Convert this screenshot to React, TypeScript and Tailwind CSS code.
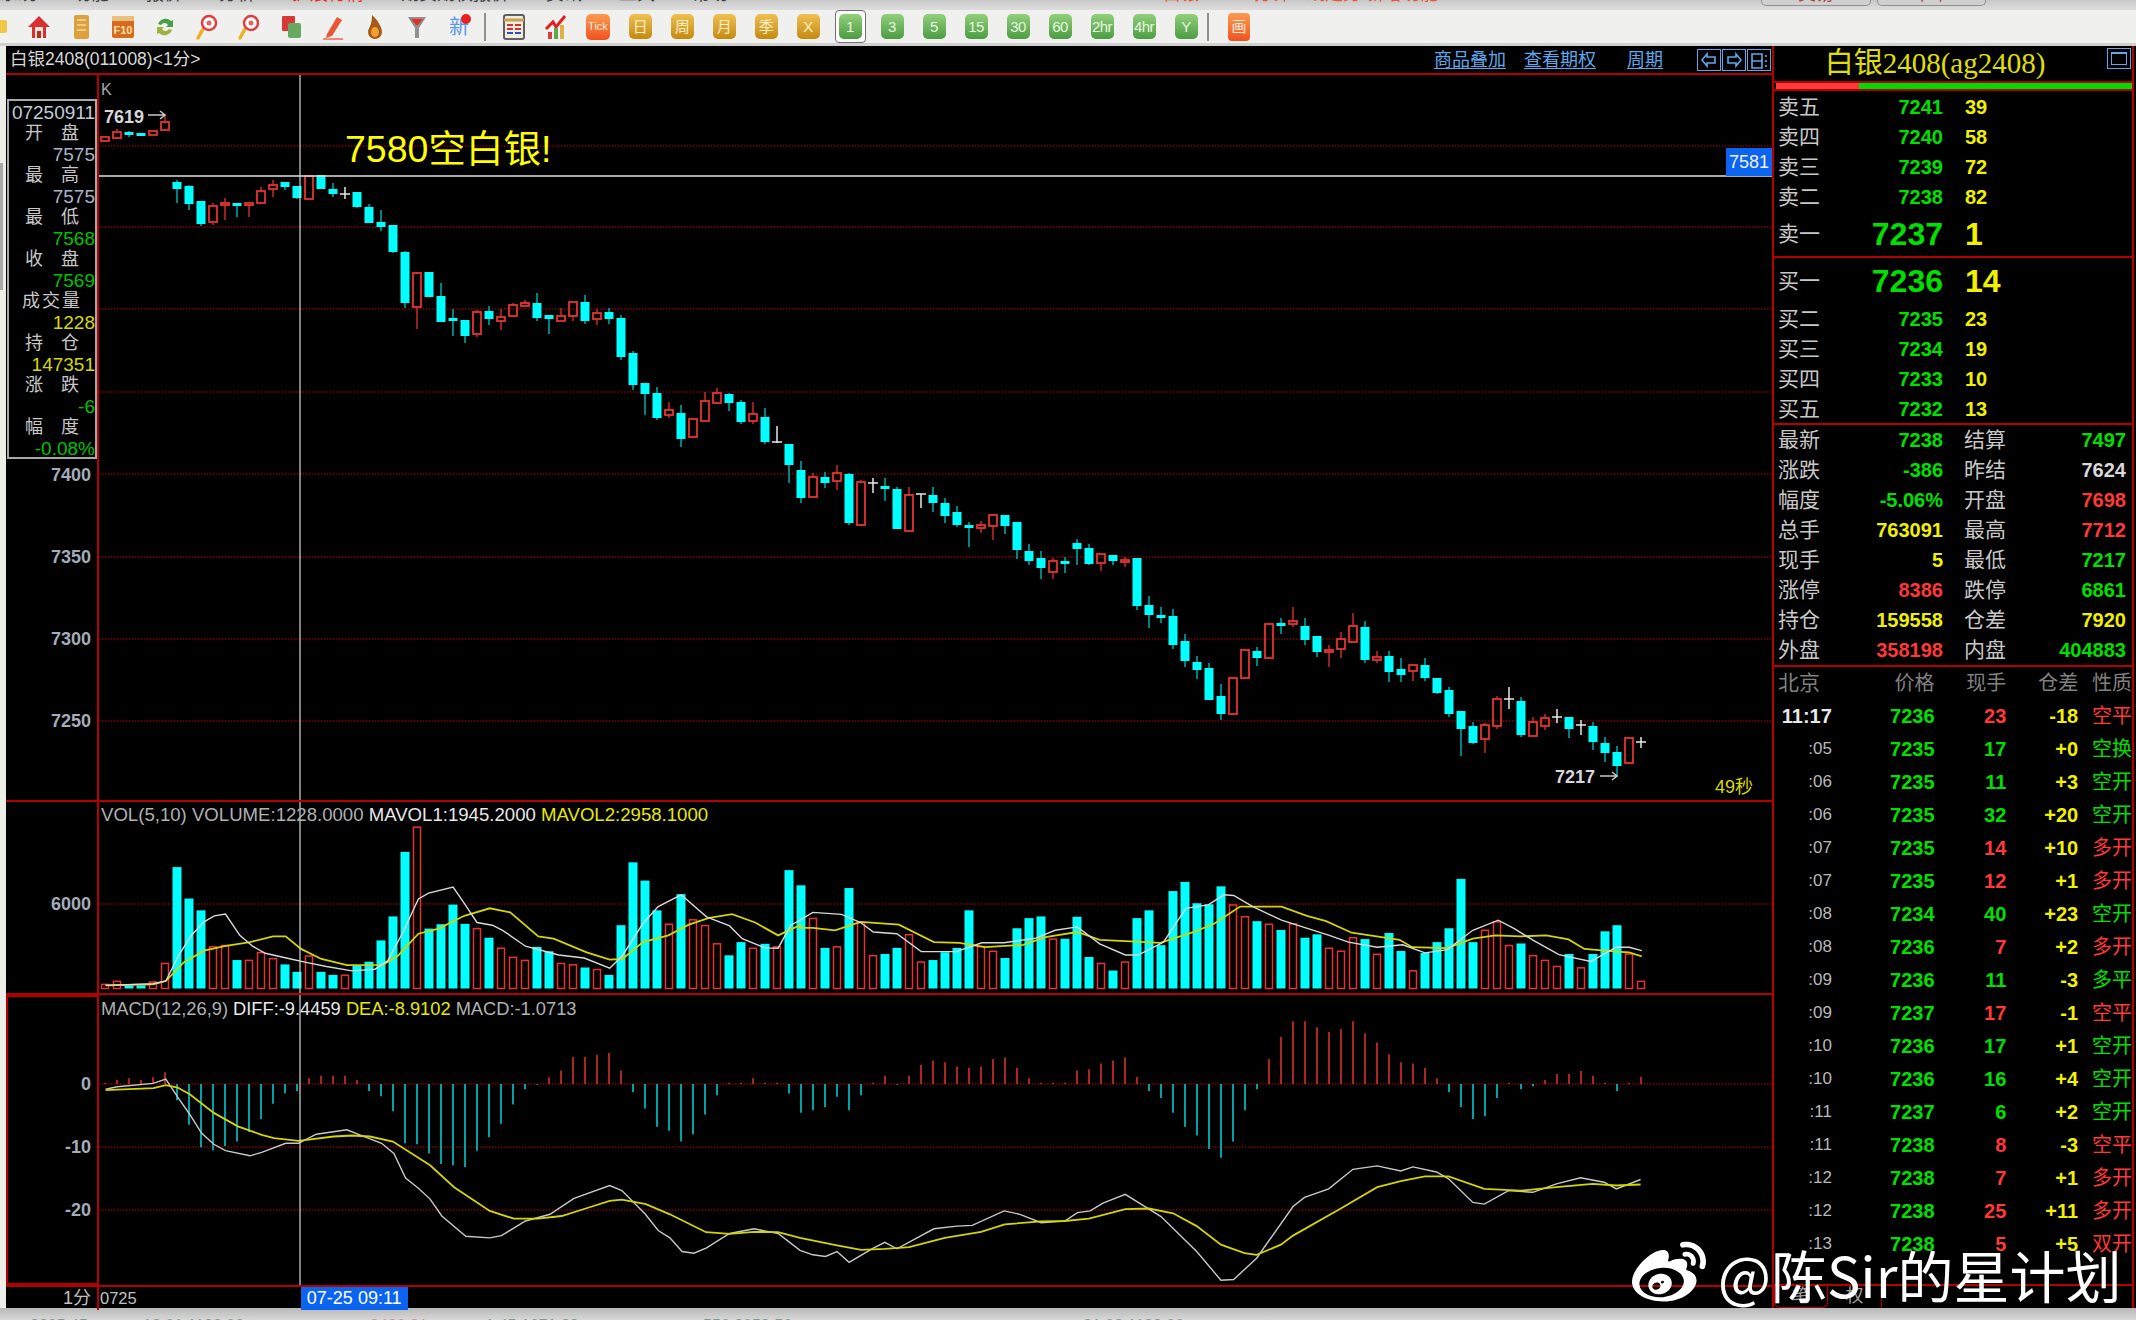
import React from 'react';
import { FaWeibo } from 'react-icons/fa';

type Kind = 'c' | 'r' | 'w';
type Candle = [number, number, number, number, Kind];

// body top, body bottom, wick top, wick bottom, colour (y in page pixels)
const candles: Candle[] = [
  [137, 141, 137, 141, 'r'], [132, 138, 129, 138, 'r'], [132, 135, 131, 137, 'c'], [133, 136, 133, 136, 'c'], [131, 135, 131, 135, 'r'], [122, 130, 114, 130, 'r'],
  [182, 189, 180, 203, 'c'], [186, 204, 185, 210, 'c'], [201, 224, 201, 226, 'c'], [206, 222, 203, 225, 'r'], [203, 205, 198, 220, 'r'], [203, 205, 203, 217, 'c'],
  [203, 205, 203, 217, 'r'], [191, 203, 187, 203, 'r'], [185, 189, 180, 197, 'r'], [182, 187, 182, 190, 'c'], [186, 198, 186, 199, 'c'], [176, 199, 176, 199, 'r'],
  [175, 189, 175, 189, 'c'], [189, 194, 183, 197, 'c'], [194, 194, 187, 199, 'w'], [192, 207, 192, 208, 'c'], [207, 223, 204, 223, 'c'], [222, 227, 210, 231, 'c'],
  [225, 252, 225, 253, 'c'], [252, 303, 251, 308, 'c'], [273, 307, 272, 329, 'r'], [272, 297, 272, 297, 'c'], [296, 322, 283, 322, 'c'], [318, 320, 309, 336, 'c'],
  [320, 336, 320, 343, 'c'], [312, 334, 310, 337, 'r'], [311, 319, 306, 325, 'c'], [317, 321, 309, 330, 'r'], [305, 316, 303, 316, 'r'], [303, 306, 300, 307, 'r'],
  [303, 318, 293, 321, 'c'], [315, 319, 315, 334, 'c'], [316, 321, 308, 321, 'r'], [302, 316, 302, 321, 'r'], [302, 321, 295, 324, 'c'], [313, 319, 309, 325, 'r'],
  [312, 319, 308, 324, 'c'], [318, 357, 315, 360, 'c'], [353, 385, 351, 390, 'c'], [383, 394, 383, 415, 'c'], [393, 418, 387, 420, 'c'], [410, 415, 402, 418, 'r'],
  [413, 439, 405, 447, 'c'], [419, 437, 419, 437, 'r'], [401, 421, 392, 421, 'r'], [393, 403, 388, 404, 'r'], [394, 403, 393, 411, 'c'], [402, 422, 400, 424, 'c'],
  [414, 421, 402, 424, 'r'], [417, 442, 408, 444, 'c'], [442, 442, 426, 443, 'w'], [444, 465, 444, 483, 'c'], [470, 498, 461, 503, 'c'], [477, 497, 473, 497, 'r'],
  [477, 483, 472, 488, 'c'], [473, 481, 465, 490, 'r'], [474, 523, 473, 525, 'c'], [482, 525, 480, 526, 'r'], [483, 483, 478, 493, 'w'], [486, 489, 478, 501, 'c'],
  [489, 529, 487, 529, 'c'], [495, 531, 487, 531, 'r'], [494, 494, 494, 508, 'w'], [495, 503, 487, 512, 'c'], [503, 516, 498, 523, 'c'], [512, 525, 506, 527, 'c'],
  [525, 528, 522, 547, 'c'], [525, 528, 521, 533, 'r'], [515, 526, 515, 540, 'r'], [515, 526, 515, 534, 'c'], [522, 550, 522, 559, 'c'], [551, 561, 544, 565, 'c'],
  [558, 568, 551, 579, 'c'], [561, 572, 558, 579, 'r'], [561, 563, 557, 573, 'c'], [543, 549, 539, 565, 'c'], [548, 564, 544, 565, 'c'], [554, 563, 554, 571, 'r'],
  [555, 561, 555, 565, 'c'], [560, 562, 557, 567, 'r'], [558, 606, 558, 610, 'c'], [605, 615, 596, 628, 'c'], [615, 618, 607, 623, 'c'], [616, 645, 609, 649, 'c'],
  [641, 661, 634, 667, 'c'], [662, 670, 656, 679, 'c'], [668, 700, 663, 700, 'c'], [696, 714, 684, 720, 'c'], [678, 714, 677, 715, 'r'], [650, 678, 650, 678, 'r'],
  [651, 658, 647, 666, 'c'], [624, 658, 624, 658, 'r'], [623, 625, 618, 634, 'c'], [621, 624, 607, 627, 'r'], [626, 640, 618, 645, 'c'], [636, 652, 636, 657, 'c'],
  [650, 652, 645, 667, 'r'], [639, 649, 632, 658, 'r'], [626, 642, 613, 642, 'r'], [627, 660, 621, 663, 'c'], [657, 660, 651, 663, 'r'], [656, 672, 651, 682, 'c'],
  [669, 675, 658, 682, 'c'], [665, 671, 664, 681, 'r'], [665, 678, 658, 681, 'c'], [678, 693, 678, 694, 'c'], [690, 714, 687, 717, 'c'], [711, 729, 711, 756, 'c'],
  [726, 743, 722, 744, 'c'], [725, 739, 723, 753, 'r'], [699, 726, 696, 729, 'r'], [699, 699, 687, 709, 'w'], [701, 735, 697, 737, 'c'], [722, 736, 717, 736, 'r'],
  [718, 726, 714, 730, 'r'], [717, 717, 709, 723, 'w'], [717, 729, 717, 738, 'c'], [725, 725, 720, 735, 'w'], [726, 742, 722, 750, 'c'], [743, 753, 737, 762, 'c'],
  [752, 766, 746, 777, 'c'], [738, 763, 738, 763, 'r'], [742, 742, 737, 748, 'w'],
];

// top of each volume bar in zoomed units, negative means a red bar
const volumes = [
  -575, -566, 578, 578, -568, -513, 228, 321, 356, -464, -460, 503, -504, -481, -499, 516, 538, -491, 538, 547, -548, 520, 508, 445, 374, 183, -110, 410, 397, 339,
  396, -410, 437, -468, -495, -504, 464, 477, -513, -517, 525, -531, 547, 400, 214, 268, 356, -397, 308, -384, -401, -455, 489, 450, -468, 455, -464, 237, 282, -380,
  467, -464, 290, -392, -490, 485, 467, -428, -509, 503, 480, 467, 356, -463, -477, 497, 409, 379, 374, -441, 440, 375, 494, -513, 534, -509, 379, 356, 459, 299,
  272, 335, 338, 285, -340, -375, 388, -397, 414, -396, 437, 427, -468, -477, -437, 441, -486, 423, 476, -535, 482, 450, 409, 263, 450, -415, -390, -460, 454, -490,
  -504, -522, 485, -526, 485, 418, 400, -485, -566,
];

// tip of each MACD stick in zoomed units, the zero line is at 868
const macdTips = [
  866, 858, 853, 858, 850, 835, 918, 990, 1057, 1066, 1053, 1040, 1012, 973, 928, 897, 890, 853, 845, 845, 845, 858, 890, 906, 950, 1045, 1048, 1075, 1106, 1110,
  1115, 1067, 1027, 987, 930, 885, 872, 850, 830, 790, 790, 783, 778, 830, 893, 942, 996, 1008, 1040, 1018, 960, 903, 866, 866, 853, 866, 866, 898, 955, 947,
  938, 907, 947, 903, 866, 845, 872, 845, 813, 800, 805, 818, 822, 818, 796, 791, 822, 853, 866, 866, 866, 830, 826, 809, 800, 791, 849, 890, 911, 955,
  996, 1022, 1062, 1088, 1040, 947, 885, 796, 730, 684, 684, 702, 716, 707, 684, 720, 747, 782, 805, 809, 822, 853, 893, 938, 973, 965, 911, 866, 885, 876,
  858, 840, 840, 831, 845, 866, 890, 866, 849,
];

// line points: first part read at 1.96 per px from x=0, second part at 1.568 per px from x=800
const toLine = (left: number[][], right: number[][]) =>
  [...left.map(([u, v]) => [u / 1.96, v]), ...right.map(([u, v]) => [800 + u / 1.568, v])]
    .map(([x, v]) => `${x.toFixed(1)},${(790 + v / 2.958).toFixed(1)}`)
    .join(' ');

const mavol1 = toLine(
  [[207, 578], [300, 573], [325, 565], [350, 490], [375, 430], [400, 390], [420, 372], [442, 367], [470, 430], [495, 462], [520, 483], [570, 500], [600, 510], [640, 522], [690, 535], [735, 530], [760, 505], [790, 420], [820, 322], [840, 305], [888, 287], [910, 335], [935, 392], [965, 400], [985, 415], [1030, 462], [1075, 480], [1095, 488], [1145, 497], [1195, 527], [1220, 490], [1260, 395], [1290, 345], [1335, 310], [1385, 375], [1430, 402], [1455, 440], [1500, 467], [1525, 468], [1550, 400]],
  [[0, 385], [20, 362], [65, 368], [95, 392], [115, 420], [152, 425], [190, 478], [245, 478], [285, 452], [320, 452], [370, 438], [400, 415], [435, 405], [470, 455], [510, 488], [530, 488], [570, 450], [605, 350], [640, 340], [665, 310], [680, 312], [710, 345], [755, 385], [830, 430], [860, 450], [905, 465], [945, 458], [980, 482], [1015, 472], [1055, 415], [1095, 385], [1120, 410], [1150, 445], [1190, 487], [1240, 507], [1280, 465], [1300, 465], [1320, 475]],
);
const mavol2 = toLine(
  [[207, 578], [300, 575], [325, 565], [360, 510], [400, 475], [440, 462], [490, 450], [535, 433], [560, 433], [590, 470], [630, 500], [680, 518], [750, 517], [780, 490], [820, 425], [860, 410], [910, 372], [960, 350], [1000, 362], [1055, 433], [1085, 440], [1150, 480], [1195, 502], [1220, 500], [1260, 450], [1310, 430], [1350, 398], [1390, 378], [1435, 367], [1480, 392], [1525, 430], [1568, 400]],
  [[0, 408], [20, 408], [55, 415], [95, 390], [155, 398], [210, 450], [250, 452], [290, 465], [350, 458], [385, 435], [435, 420], [470, 443], [510, 447], [565, 452], [620, 418], [650, 395], [690, 345], [720, 345], [755, 345], [795, 372], [825, 388], [865, 422], [940, 443], [960, 465], [1015, 468], [1055, 440], [1090, 430], [1130, 433], [1170, 430], [1205, 442], [1230, 470], [1280, 478], [1300, 480], [1320, 492]],
);
const diff = toLine(
  [[207, 885], [230, 878], [300, 868], [325, 855], [350, 912], [372, 960], [395, 1015], [419, 1048], [442, 1067], [490, 1082], [513, 1072], [560, 1045], [585, 1045], [620, 1018], [680, 1005], [705, 1020], [748, 1045], [772, 1075], [795, 1148], [820, 1178], [843, 1210], [866, 1260], [913, 1320], [960, 1325], [983, 1318], [1030, 1275], [1078, 1255], [1125, 1208], [1195, 1170], [1219, 1185], [1265, 1255], [1290, 1303], [1313, 1325], [1337, 1365], [1360, 1370], [1384, 1355], [1430, 1312], [1478, 1298], [1525, 1312]],
  [[0, 1362], [20, 1375], [40, 1380], [58, 1365], [77, 1397], [115, 1355], [133, 1338], [152, 1357], [210, 1298], [246, 1290], [270, 1288], [320, 1245], [345, 1255], [378, 1280], [415, 1275], [435, 1250], [455, 1245], [475, 1222], [510, 1196], [566, 1262], [622, 1365], [660, 1450], [680, 1448], [716, 1385], [773, 1232], [791, 1205], [829, 1180], [867, 1122], [905, 1112], [942, 1127], [961, 1115], [998, 1130], [1017, 1150], [1055, 1220], [1073, 1225], [1111, 1185], [1149, 1190], [1186, 1165], [1224, 1147], [1261, 1160], [1280, 1180], [1318, 1152]],
);
const dea = toLine(
  [[207, 888], [254, 885], [301, 882], [325, 873], [348, 880], [372, 900], [419, 955], [466, 995], [513, 1020], [537, 1030], [585, 1038], [654, 1025], [690, 1022], [725, 1025], [770, 1040], [843, 1110], [890, 1175], [960, 1245], [1007, 1268], [1054, 1268], [1101, 1260], [1148, 1238], [1195, 1215], [1219, 1212], [1266, 1225], [1313, 1255], [1384, 1308], [1430, 1313], [1478, 1307], [1525, 1308]],
  [[0, 1325], [58, 1347], [96, 1360], [133, 1357], [171, 1352], [227, 1325], [284, 1307], [321, 1285], [378, 1276], [415, 1275], [453, 1268], [510, 1240], [547, 1238], [585, 1252], [622, 1290], [660, 1345], [697, 1370], [716, 1375], [754, 1345], [773, 1318], [848, 1238], [905, 1175], [942, 1157], [980, 1143], [1017, 1143], [1073, 1180], [1130, 1185], [1186, 1175], [1243, 1165], [1280, 1170], [1318, 1167]],
);

const CROSS_X = 300;
const barX = (i: number) => 105 + 12 * i;
const CYAN = '#00ffff';
const RED = '#e63232';

const Grid: React.FC<{ ys: number[] }> = ({ ys }) => (
  <>
    {ys.map((y) => (
      <line key={y} x1={99} x2={1772} y1={y} y2={y} stroke="#800000" strokeWidth={1.5} strokeDasharray="1.5 1.5" />
    ))}
  </>
);

const CandleChart: React.FC = () => (
  <svg className="block w-full h-full" viewBox="99 75 1673 725">
    <Grid ys={[146, 227, 309, 392, 474, 557, 639, 721]} />
    {candles.map(([top, bot, wt, wb, kind], i) => {
      const x = barX(i);
      if (kind === 'w') {
        return (
          <g key={i} stroke="#e8e8e8" strokeWidth={1.5}>
            <line x1={x} x2={x} y1={wt} y2={wb} />
            <line x1={x - 5} x2={x + 5} y1={top} y2={top} />
          </g>
        );
      }
      if (kind === 'r') {
        return (
          <g key={i} stroke={RED} fill="none">
            <line x1={x} x2={x} y1={wt} y2={top} strokeWidth={1.3} />
            <line x1={x} x2={x} y1={bot} y2={wb} strokeWidth={1.3} />
            <rect x={x - 4} y={top} width={8} height={bot - top} strokeWidth={1.8} />
          </g>
        );
      }
      return (
        <g key={i} fill={CYAN} stroke="none">
          <rect x={x - 0.6} y={wt} width={1.2} height={wb - wt} fill="#00d8d8" />
          <rect x={x - 4.5} y={top} width={9} height={Math.max(bot - top, 3)} />
        </g>
      );
    })}
    <line x1={99} x2={1772} y1={176} y2={176} stroke="#e0e0e0" strokeWidth={1.6} />
    <line x1={CROSS_X} x2={CROSS_X} y1={75} y2={800} stroke="#d8d8d8" strokeWidth={1.2} />
    <path d="M148 115H165M160 111l5 4-5 4" stroke="#c8c8c8" strokeWidth={1.5} fill="none" />
    <path d="M1600 776H1617M1612 772l5 4-5 4" stroke="#c8c8c8" strokeWidth={1.5} fill="none" />
  </svg>
);

const VolumeChart: React.FC = () => (
  <svg className="block w-full h-full" viewBox="99 802 1673 191">
    <Grid ys={[904]} />
    {volumes.map((v, i) => {
      const top = 790 + Math.abs(v) / 2.958;
      const x = barX(i);
      return v < 0 ? (
        <rect key={i} x={x - 3.5} y={top} width={7} height={988.5 - top} fill="none" stroke={RED} strokeWidth={1.5} />
      ) : (
        <rect key={i} x={x - 4.5} y={top} width={9} height={988.5 - top} fill={CYAN} />
      );
    })}
    <polyline points={mavol2} fill="none" stroke="#d4d400" strokeWidth={1.8} />
    <polyline points={mavol1} fill="none" stroke="#d8d8d8" strokeWidth={1.4} />
    <line x1={CROSS_X} x2={CROSS_X} y1={802} y2={993} stroke="#d8d8d8" strokeWidth={1.2} />
  </svg>
);

const MacdChart: React.FC = () => (
  <svg className="block w-full h-full" viewBox="99 995 1673 290">
    <Grid ys={[1084, 1147, 1210]} />
    {macdTips.map((v, i) => {
      const tip = 790 + v / 2.958;
      return <line key={i} x1={barX(i)} x2={barX(i)} y1={1084} y2={tip} stroke={v > 868 ? '#00d8e0' : RED} strokeWidth={1.5} />;
    })}
    <polyline points={diff} fill="none" stroke="#c8c8c8" strokeWidth={1.4} />
    <polyline points={dea} fill="none" stroke="#d4d400" strokeWidth={1.8} />
    <line x1={CROSS_X} x2={CROSS_X} y1={995} y2={1285} stroke="#d8d8d8" strokeWidth={1.2} />
  </svg>
);

const infoRows: [string, string, string][] = [
  ['开　盘', '7575', 'text-[#a8b4c8]'],
  ['最　高', '7575', 'text-[#a8b4c8]'],
  ['最　低', '7568', 'text-[#00c000]'],
  ['收　盘', '7569', 'text-[#00c000]'],
  ['成交量', '1228', 'text-[#d8d800]'],
  ['持　仓', '147351', 'text-[#d8d800]'],
  ['涨　跌', '-6', 'text-[#00c000]'],
  ['幅　度', '-0.08%', 'text-[#00c000]'],
];

const InfoBox: React.FC = () => (
  <div className="absolute left-[1px] top-[24px] w-[90px] h-[360px] border-2 border-[#a8a8a8] bg-black pt-[1px] text-[19px] leading-[21px]">
    <div className="text-right text-[#c0ccd8] whitespace-nowrap">07250911</div>
    {infoRows.map(([label, value, color]) => (
      <div key={label}>
        <div className={`text-center text-[18px] text-[#c8c8c8] ${label === '成交量' ? 'tracking-[2px]' : ''}`}>{label}</div>
        <div className={`text-right ${color}`}>{value}</div>
      </div>
    ))}
  </div>
);

const AxisLabel: React.FC<{ top: string; children: React.ReactNode }> = ({ top, children }) => (
  <div className={`absolute right-[6px] text-[18px] leading-[20px] font-bold text-[#a4acb8] ${top}`}>{children}</div>
);

type Tone = 'gold' | 'green' | 'orange';
const toneClass: Record<Tone, string> = {
  gold: 'bg-linear-to-b from-[#eec050] to-[#c48a08] text-[#fbeec0]',
  green: 'bg-linear-to-b from-[#92cf7c] to-[#4c9c44] text-[#e4f8dc]',
  orange: 'bg-linear-to-b from-[#fb9a50] to-[#f0501c] text-[#ffeedd]',
};

const ToolButton: React.FC<{ label: string; tone: Tone; selected?: boolean }> = ({ label, tone, selected }) => (
  <div className="w-[42px] h-[34px] flex items-center justify-center">
    <div className={selected ? 'p-[3px] bg-white border border-[#707070] rounded-[4px]' : ''}>
      <div className={`w-[23px] h-[25px] rounded-[5px] flex items-center justify-center text-[15px] leading-none whitespace-nowrap tracking-[-0.5px] ${toneClass[tone]}`}>
        {label}
      </div>
    </div>
  </div>
);

const Icon: React.FC<{ children: React.ReactNode }> = ({ children }) => (
  <div className="w-[42px] h-[34px] flex items-center justify-center">
    <svg width="28" height="28" viewBox="0 0 28 28">{children}</svg>
  </div>
);

const Magnifier: React.FC = () => (
  <Icon>
    <path d="M10 16 5 25" stroke="#f0b020" strokeWidth="3.5" strokeLinecap="round" />
    <circle cx="16" cy="10" r="7" fill="#fff" stroke="#e04040" strokeWidth="2.5" />
    <circle cx="16" cy="10" r="2.5" fill="#e86060" />
  </Icon>
);

const goldLabels = ['日', '周', '月', '季', 'X'];
const greenLabels = ['3', '5', '15', '30', '60', '2hr', '4hr', 'Y'];

const Toolbar: React.FC = () => (
  <div className="h-[33px] flex items-center bg-[#f0f0ee] overflow-hidden">
    <div className="w-[7px] h-[13px] mr-[11px] bg-[#f0c848] rounded-r-[2px]" />
    <Icon>
      <path d="M14 3 3 14h4v11h14V14h4z" fill="#d83030" />
      <path d="M10 14h8v11h-8z" fill="#f4e4d8" />
      <path d="M12 18h4v7h-4z" fill="#b03020" />
    </Icon>
    <Icon>
      <rect x="7" y="2" width="15" height="24" rx="2" fill="#dca040" />
      <path d="M10 7h9M10 12h9M10 17h9" stroke="#f6d890" strokeWidth="1.5" />
    </Icon>
    <Icon>
      <rect x="3" y="5" width="22" height="20" rx="2" fill="#d86a20" />
      <rect x="3" y="3" width="22" height="5" fill="#e8c080" />
      <text x="14" y="21" textAnchor="middle" fontSize="11" fontWeight="bold" fill="#ffe0a0">F10</text>
    </Icon>
    <Icon>
      <path d="M7 11a8 8 0 0 1 13-3l2-1v7h-7l2-2a4 4 0 0 0-7 0z" fill="#48a048" />
      <path d="M21 17a8 8 0 0 1-13 3l-2 1v-7h7l-2 2a4 4 0 0 0 7 0z" fill="#a0b040" />
    </Icon>
    <Magnifier />
    <Magnifier />
    <Icon>
      <rect x="5" y="3" width="13" height="15" rx="1" fill="#d83838" />
      <rect x="11" y="10" width="13" height="15" rx="2" fill="#68a860" />
    </Icon>
    <Icon>
      <path d="M8 21 18 4l5 3-10 16-6 2z" fill="#e85838" />
      <path d="M4 26h20" stroke="#f08878" strokeWidth="2" />
    </Icon>
    <Icon>
      <path d="M11 2c5 4 10 12 10 17a7 7 0 0 1-14 0c0-4 4-6 4-17z" fill="#a85818" />
      <ellipse cx="14" cy="19" rx="4" ry="5" fill="#f0a030" />
    </Icon>
    <Icon>
      <path d="M5 4h18l-7 11v10h-4V15z" fill="#909090" />
      <path d="M8 6h12l-5 6h-2z" fill="#e03030" />
    </Icon>
    <div className="w-[42px] h-[34px] relative flex items-center justify-center text-[20px] text-[#5898e8]">
      新
      <span className="absolute right-[9px] top-[4px] w-[10px] h-[10px] rounded-full bg-[#e82020]" />
    </div>
    <div className="w-[2px] h-[28px] bg-[#909090] ml-[4px] mr-[7px]" />
    <Icon>
      <rect x="4" y="2" width="20" height="24" rx="2" fill="#f0ece0" stroke="#606060" strokeWidth="2" />
      <path d="M4 7h20" stroke="#c8a050" strokeWidth="3" />
      <path d="M7 12h6M15 12h6M7 16h6M15 16h6" stroke="#d03030" strokeWidth="2" />
      <path d="M7 20h6M15 20h6" stroke="#3050c0" strokeWidth="2" />
    </Icon>
    <Icon>
      <path d="M4 16 11 9l3 5 9-11" fill="none" stroke="#e02020" strokeWidth="3" />
      <rect x="6" y="19" width="4" height="7" fill="#d84040" />
      <rect x="12" y="15" width="4" height="11" fill="#60a850" />
      <rect x="18" y="12" width="4" height="14" fill="#e0b040" />
    </Icon>
    <div className="w-[42px] h-[34px] flex items-center justify-center">
      <div className={`w-[24px] h-[26px] rounded-[5px] flex items-center justify-center text-[11px] leading-none ${toneClass.orange}`}>Tick</div>
    </div>
    {goldLabels.map((l) => (
      <ToolButton key={l} label={l} tone="gold" />
    ))}
    <ToolButton label="1" tone="green" selected />
    {greenLabels.map((l) => (
      <ToolButton key={l} label={l} tone="green" />
    ))}
    <div className="w-[2px] h-[28px] bg-[#909090]" />
    <div className="w-[60px] h-[34px] flex items-center justify-center">
      <div className={`w-[22px] h-[28px] rounded-[4px] flex items-center justify-center text-[15px] leading-none ${toneClass.orange}`}>画</div>
    </div>
  </div>
);

const menuItems = ['系统', '功能', '报价', '分析', '扩展行情', '期货期权报价', '资讯', '工具', '帮助'];

const MenuBar: React.FC = () => (
  <div className="h-[10px] overflow-hidden flex bg-linear-to-b from-[#c8c8c8] to-[#dedede] text-[#404040] text-[18px] leading-[18px]">
    <div className="w-[1163px] flex gap-[37px] -mt-[15px] whitespace-nowrap">
      {menuItems.map((m) => (
        <span key={m} className={m === '扩展行情' ? 'text-[#e83020]' : ''}>{m}</span>
      ))}
    </div>
    <div className="w-[598px] -mt-[15px] text-[#e85830] whitespace-nowrap">白银2408 1分钟 K线走势 新增功能</div>
    <div className="w-[110px] mr-[6px] h-[6px] rounded-b-[5px] border border-t-0 border-[#909090] bg-[#cfcfcf] text-[#b04040] text-center overflow-hidden">
      <div className="-mt-[15px]">交易</div>
    </div>
    <div className="w-[109px] h-[6px] rounded-b-[5px] border border-t-0 border-[#909090] bg-[#cfcfcf] text-[#b04040] text-center overflow-hidden">
      <div className="-mt-[15px]">下单</div>
    </div>
  </div>
);

const ChartHeader: React.FC = () => (
  <div className="h-[29px] flex items-center border-b-2 border-[#b40000] pl-[4px] text-[18px]">
    <span className="text-[17.5px] text-[#d8d8d8] whitespace-nowrap">白银2408(011008)&lt;1分&gt;</span>
    <div className="ml-auto flex items-center pt-[1px] text-[#5fa8ec] underline underline-offset-2">
      <span className="w-[72px] mr-[18px] whitespace-nowrap">商品叠加</span>
      <span className="w-[72px] mr-[31px] whitespace-nowrap">查看期权</span>
      <span className="w-[36px] mr-[34px] whitespace-nowrap">周期</span>
    </div>
    <div className="flex gap-[1px] pr-[1px]">
      {['M17 7h-8V4l-5 6 5 6v-3h8z', 'M5 7h8V4l5 6-5 6v-3H5z', 'M4 4h10v14H4zM4 11h10M18 5v2M18 10v2M18 15v2'].map((d) => (
        <svg key={d} width="24" height="22" viewBox="0 0 22 20" className="border border-[#5fa8ec]">
          <path d={d} fill="none" stroke="#5fa8ec" strokeWidth="1.6" />
        </svg>
      ))}
    </div>
  </div>
);

const quoteAsk = [
  ['卖五', '7241', '39'],
  ['卖四', '7240', '58'],
  ['卖三', '7239', '72'],
  ['卖二', '7238', '82'],
];
const quoteBid = [
  ['买二', '7235', '23'],
  ['买三', '7234', '19'],
  ['买四', '7233', '10'],
  ['买五', '7232', '13'],
];

const QuoteRow: React.FC<{ label: string; price: string; qty: string; big?: boolean }> = ({ label, price, qty, big }) => (
  <div className={`flex items-center ${big ? 'h-[45px]' : 'h-[30px] pt-[2px]'}`}>
    <span className="w-[44px] ml-[4px] text-[#c8c8c8] text-[21px]">{label}</span>
    <span className={`w-[121px] text-right text-[#00e000] font-bold ${big ? 'text-[32px]' : 'text-[20px]'}`}>{price}</span>
    <span className={`ml-[22px] text-[#f0f000] font-bold ${big ? 'text-[32px]' : 'text-[20px]'}`}>{qty}</span>
  </div>
);

const G = 'text-[#00e000]';
const Y = 'text-[#f0f000]';
const R = 'text-[#ff3838]';
const W = 'text-[#d8d8d8]';

const stats: [string, string, string, string, string, string][] = [
  ['最新', '7238', G, '结算', '7497', G],
  ['涨跌', '-386', G, '昨结', '7624', W],
  ['幅度', '-5.06%', G, '开盘', '7698', R],
  ['总手', '763091', Y, '最高', '7712', R],
  ['现手', '5', Y, '最低', '7217', G],
  ['涨停', '8386', R, '跌停', '6861', G],
  ['持仓', '159558', Y, '仓差', '7920', Y],
  ['外盘', '358198', R, '内盘', '404883', G],
];

const ticks: [string, string, string, string, string, string, string][] = [
  ['11:17', '7236', '23', R, '-18', '空平', R],
  [':05', '7235', '17', G, '+0', '空换', G],
  [':06', '7235', '11', G, '+3', '空开', G],
  [':06', '7235', '32', G, '+20', '空开', G],
  [':07', '7235', '14', R, '+10', '多开', R],
  [':07', '7235', '12', R, '+1', '多开', R],
  [':08', '7234', '40', G, '+23', '空开', G],
  [':08', '7236', '7', R, '+2', '多开', R],
  [':09', '7236', '11', G, '-3', '多平', G],
  [':09', '7237', '17', R, '-1', '空平', R],
  [':10', '7236', '17', G, '+1', '空开', G],
  [':10', '7236', '16', G, '+4', '空开', G],
  [':11', '7237', '6', G, '+2', '空开', G],
  [':11', '7238', '8', R, '-3', '空平', R],
  [':12', '7238', '7', R, '+1', '多开', R],
  [':12', '7238', '25', R, '+11', '多开', R],
  [':13', '7238', '5', R, '+5', '双开', R],
];

const RightPanel: React.FC = () => (
  <div className="w-[362px] flex flex-col border-l-2 border-r-2 border-[#b40000] text-[20px]">
    <div className="relative h-[37px] flex items-center justify-center border-b-2 border-[#b40000] pr-[36px]">
      <span className="font-['Liberation_Serif','Noto_Sans_CJK_SC',serif] text-[29px] leading-none text-[#e0e000] whitespace-nowrap">白银2408(ag2408)</span>
      <div className="absolute right-[1px] top-[2px] w-[24px] h-[21px] border border-[#5fa8ec] p-[3px]">
        <div className="h-full border border-[#5fa8ec] border-t-2" />
      </div>
    </div>
    <div className="h-[8px] flex border-b-2 border-[#b40000] pl-[2px] shrink-0">
      <div className="w-[83px] bg-[#ff3838]" />
      <div className="flex-1 bg-[#00dc00]" />
    </div>
    {quoteAsk.map(([l, p, q]) => (
      <QuoteRow key={l} label={l} price={p} qty={q} />
    ))}
    <QuoteRow label="卖一" price="7237" qty="1" big />
    <div className="h-[2px] bg-[#b40000]" />
    <QuoteRow label="买一" price="7236" qty="14" big />
    {quoteBid.map(([l, p, q]) => (
      <QuoteRow key={l} label={l} price={p} qty={q} />
    ))}
    <div className="h-[2px] bg-[#b40000]" />
    {stats.map(([l1, v1, c1, l2, v2, c2]) => (
      <div key={l1} className="h-[30px] flex items-center font-bold">
        <span className="w-[44px] ml-[4px] text-[21px] font-normal text-[#c8c8c8]">{l1}</span>
        <span className={`w-[121px] text-right ${c1}`}>{v1}</span>
        <span className="w-[44px] ml-[21px] text-[21px] font-normal text-[#c8c8c8]">{l2}</span>
        <span className={`w-[118px] text-right ${c2}`}>{v2}</span>
      </div>
    ))}
    <div className="h-[2px] bg-[#b40000]" />
    <div className="h-[32px] flex items-center text-[#808080]">
      <span className="w-[58px] pl-[4px] text-[21px]">北京</span>
      <span className="w-[103px] text-right">价格</span>
      <span className="w-[72px] text-right">现手</span>
      <span className="w-[72px] text-right">仓差</span>
      <span className="w-[54px] text-right">性质</span>
    </div>
    {ticks.map(([t, p, n, nc, d, kind, kc], i) => (
      <div key={i} className="h-[33px] flex items-center whitespace-nowrap">
        <span className={`w-[58px] text-right ${i === 0 ? 'font-bold text-[#e8e8e8] text-[20px]' : 'text-[#b8b8b8] text-[17px]'}`}>{t}</span>
        <span className={`w-[103px] text-right font-bold ${G}`}>{p}</span>
        <span className={`w-[72px] text-right font-bold ${nc}`}>{n}</span>
        <span className={`w-[72px] text-right font-bold ${Y}`}>{d}</span>
        <span className={`w-[54px] text-right ${kc}`}>{kind}</span>
      </div>
    ))}
    <div className="flex-1" />
    <div className="h-[2px] bg-[#b40000]" />
    <div className="h-[22px] flex text-[18px] text-[#a0a0a0] leading-[20px]">
      <div className="w-[54px] text-center border-x border-b border-[#b40000] rounded-b-[6px]">笔</div>
      <div className="w-[54px] text-center border-r border-[#b40000]">权</div>
    </div>
  </div>
);

const App: React.FC = () => {
  return (
    <div className="w-[2136px] h-[1320px] flex flex-col overflow-hidden bg-[#d8d8d8] font-['Liberation_Sans','Noto_Sans_CJK_SC',sans-serif]">
      <MenuBar />
      <Toolbar />
      <div className="h-[3px] bg-[#d0d0d0]" />
      <div className="relative h-[1262px] flex bg-black">
        <div className="relative w-[6px] bg-[#eeeee8]">
          <div className="absolute left-0 top-[117px] w-[3px] h-[127px] bg-[#a8a8a8]" />
        </div>
        <div className="w-[1766px] flex flex-col">
          <ChartHeader />

          {/* main candle panel */}
          <div className="h-[727px] flex border-b-2 border-[#b40000]">
            <div className="relative w-[93px] border-r-2 border-[#b40000] shrink-0">
              <InfoBox />
              <AxisLabel top="top-[390px]">7400</AxisLabel>
              <AxisLabel top="top-[472px]">7350</AxisLabel>
              <AxisLabel top="top-[554px]">7300</AxisLabel>
              <AxisLabel top="top-[636px]">7250</AxisLabel>
            </div>
            <div className="relative flex-1">
              <CandleChart />
              <span className="absolute left-[2px] top-[3px] text-[16px] text-[#a8a8a8]">K</span>
              <span className="absolute left-[5px] top-[29px] text-[18px] font-bold text-[#d8d8d8]">7619</span>
              <span className="absolute left-[246px] top-[52px] text-[37.5px] leading-[44px] text-[#ffff00] whitespace-nowrap">7580空白银!</span>
              <span className="absolute right-[0px] top-[73px] h-[28px] w-[46px] bg-[#0a64f0] text-[#f0f0f0] text-[18px] leading-[28px] text-center">7581</span>
              <span className="absolute left-[1456px] top-[689px] text-[18px] font-bold text-[#d8d8d8]">7217</span>
              <span className="absolute right-[19px] top-[699px] text-[18px] text-[#d8d800]">49秒</span>
            </div>
          </div>

          {/* volume panel */}
          <div className="h-[193px] flex border-b-2 border-[#b40000]">
            <div className="relative w-[93px] border-r-2 border-[#b40000] shrink-0">
              <AxisLabel top="top-[92px]">6000</AxisLabel>
            </div>
            <div className="relative flex-1">
              <VolumeChart />
              <div className="absolute left-[2px] top-[2px] text-[18.6px] leading-[22px] whitespace-nowrap text-[#b0b0b0]">
                VOL(5,10) VOLUME:1228.0000 <span className="text-[#e8e8e8]">MAVOL1:1945.2000</span>{' '}
                <span className="text-[#e8e800]">MAVOL2:2958.1000</span>
              </div>
            </div>
          </div>

          {/* macd panel */}
          <div className="h-[290px] flex">
            <div className="relative w-[93px] border-2 border-[#b40000] shrink-0">
              <AxisLabel top="top-[77px]">0</AxisLabel>
              <AxisLabel top="top-[140px]">-10</AxisLabel>
              <AxisLabel top="top-[203px]">-20</AxisLabel>
            </div>
            <div className="relative flex-1">
              <MacdChart />
              <div className="absolute left-[2px] top-[3px] text-[18.3px] leading-[22px] whitespace-nowrap text-[#b0b0b0]">
                MACD(12,26,9) <span className="text-[#e8e8e8]">DIFF:-9.4459</span>{' '}
                <span className="text-[#e8e800]">DEA:-8.9102</span> MACD:-1.0713
              </div>
            </div>
          </div>

          {/* time axis */}
          <div className="flex-1 flex border-t-2 border-[#b40000] text-[16.5px] leading-[22px]">
            <div className="w-[93px] border-r-2 border-[#b40000] text-right pr-[6px] text-[#c0c0c0] text-[18px] shrink-0">1分</div>
            <span className="ml-[1px] text-[#c0c0c0]">0725</span>
            <span className="ml-[164px] w-[107px] h-[23px] bg-[#0a64f0] text-white text-[18px] text-center whitespace-nowrap">07-25 09:11</span>
          </div>
        </div>
        <RightPanel />

        {/* weibo watermark */}
        <div className="absolute left-[1632px] top-[1191px] flex items-center gap-[12px] text-white whitespace-nowrap pointer-events-none">
          <FaWeibo className="w-[74px] h-[74px]" />
          <span className="text-[56px] leading-[60px] font-['Noto_Sans_CJK_SC','Liberation_Sans',sans-serif]">@陈Sir的星计划</span>
        </div>
      </div>
      <div className="flex-1 overflow-hidden bg-linear-to-b from-[#b8b8b8] to-[#d8d8d8] text-[16px] leading-[18px] text-[#7f9a8c] whitespace-nowrap pl-[30px] pt-[9px] flex">
        <span className="w-[113px]">2205.45</span>
        <span className="w-[157px]">12:01 1123.00</span>
        <span className="w-[70px] text-[#404040]">▲</span>
        <span className="w-[110px] text-[#d09090]">2420.21</span>
        <span className="w-[223px]">-1.45 1671.22</span>
        <span className="w-[380px]">556 2058.56</span>
        <span className="w-[200px]">21:08 1123.00</span>
      </div>
    </div>
  );
};

export default App;
